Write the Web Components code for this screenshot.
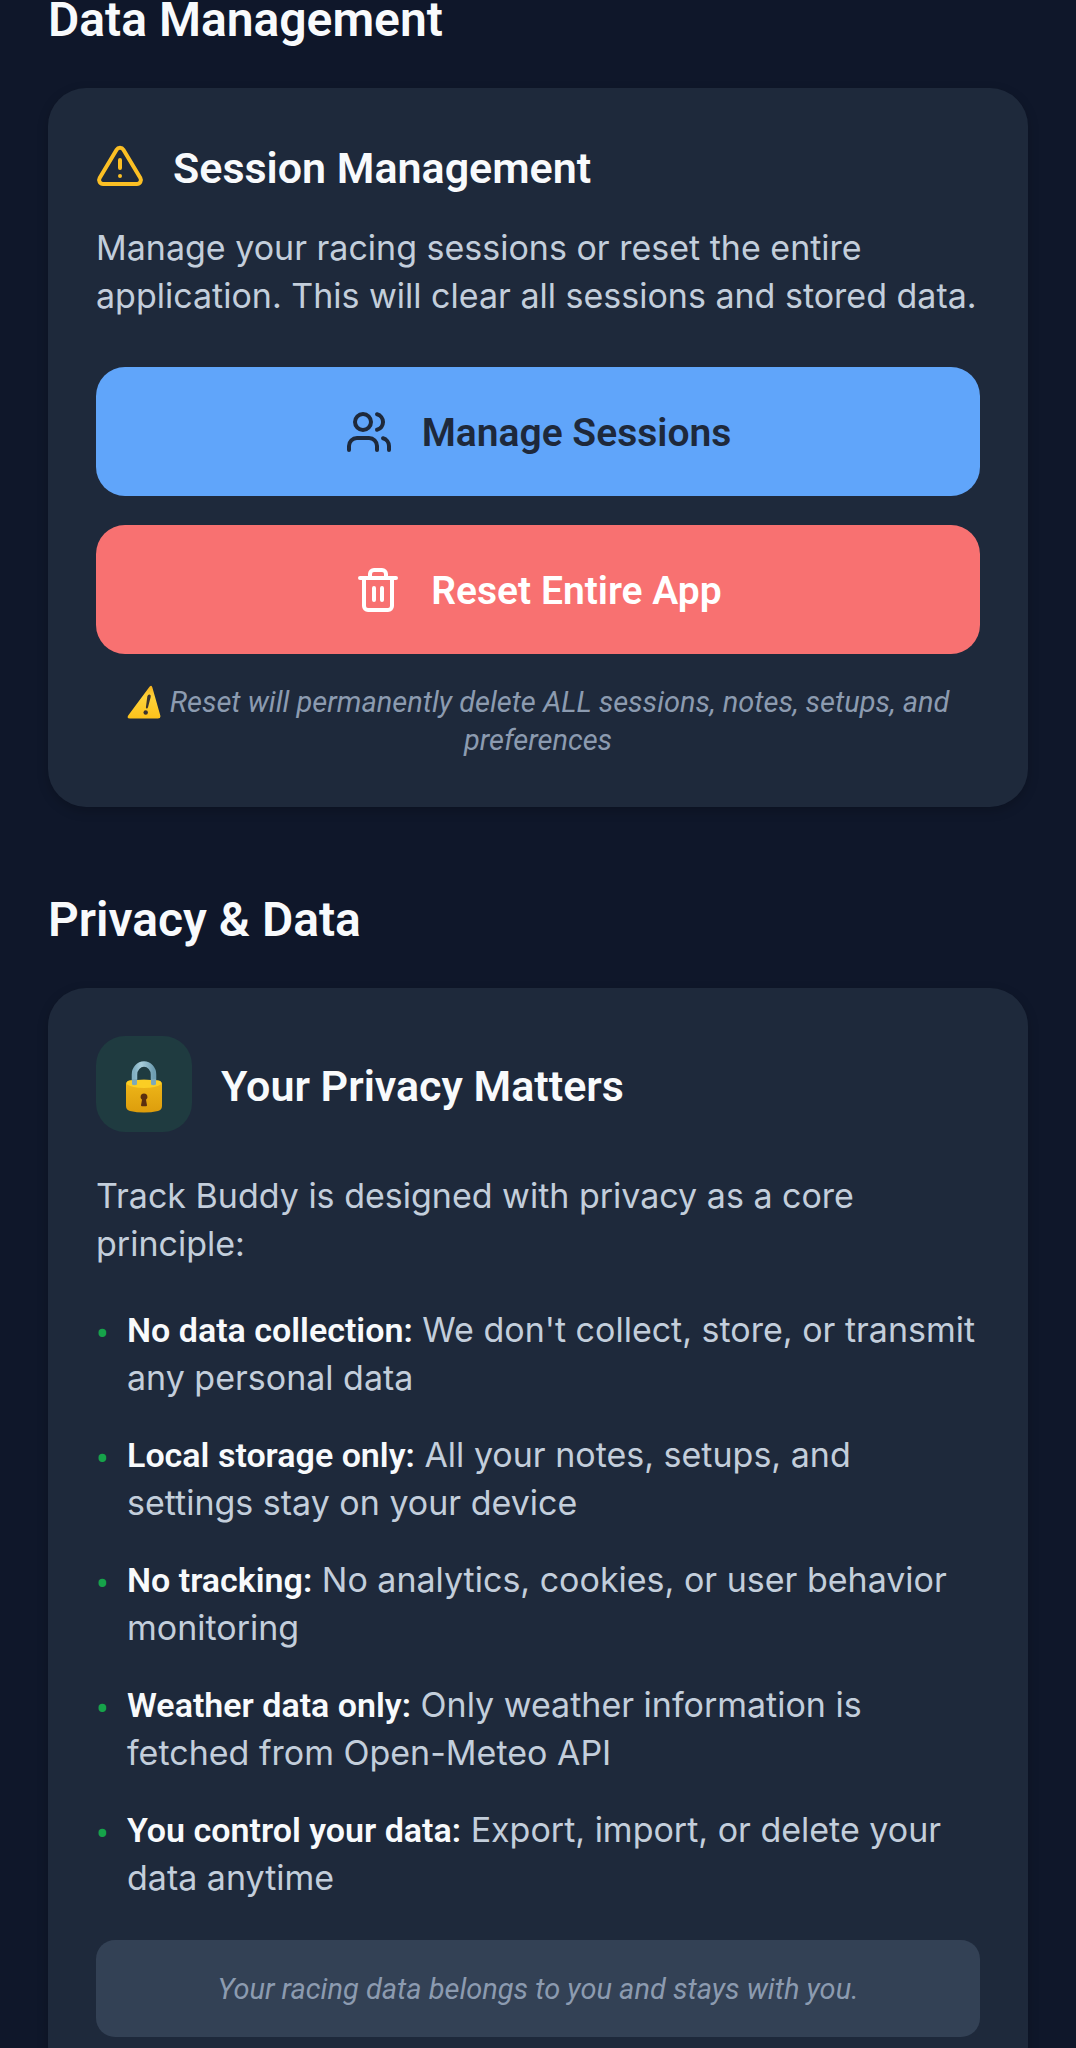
<!DOCTYPE html>
<html lang="en">
<head>
<meta charset="utf-8">
<meta name="viewport" content="width=device-width, initial-scale=1">
<title>Track Buddy – Settings</title>
<style>
  html { background: #0f172a; }
  body { margin: 0; font-family: Roboto, "Liberation Sans", sans-serif; color: #f8fafc; }
</style>
</head>
<body>
<settings-page>
  <settings-section heading="Data Management">
    <settings-card heading="Session Management">
      <app-icon slot="icon" name="alert"></app-icon>
      <body-text>Manage your racing sessions or reset the entire application. This will clear all sessions and stored data.</body-text>
      <button-stack>
        <action-button icon="users">Manage Sessions</action-button>
        <action-button icon="trash" variant="danger">Reset Entire App</action-button>
        <fine-print><app-icon name="warning"></app-icon> Reset will permanently delete ALL sessions, notes, setups, and preferences</fine-print>
      </button-stack>
    </settings-card>
  </settings-section>
  <settings-section heading="Privacy &amp; Data">
    <settings-card heading="Your Privacy Matters" roomy>
      <icon-badge slot="icon"><app-icon name="lock"></app-icon></icon-badge>
      <body-text>Track Buddy is designed with privacy as a core principle:</body-text>
      <promise-list></promise-list>
      <note-box><fine-print>Your racing data belongs to you and stays with you.</fine-print></note-box>
    </settings-card>
  </settings-section>
</settings-page>

<script>
class BaseElement extends HTMLElement {
  connectedCallback() {
    if (this.shadowRoot) return;
    this.attachShadow({ mode: "open" }).innerHTML = this.render();
  }
}

const define = (name, render) =>
  customElements.define(name, class extends BaseElement { render() { return render(this); } });

const ICONS = {
  alert: `<svg class="line" viewBox="0 0 24 24"><path d="M10.290 2.860 1.820 17a2 2 0 0 0 1.710 3h16.940a2 2 0 0 0 1.710-3L13.710 2.860a2 2 0 0 0-3.420 0z"/><path d="M12 8v4M12 16h.01"/></svg>`,
  users: `<svg class="line" viewBox="0 0 24 24"><path d="M16 21v-2a4 4 0 0 0-4-4H6a4 4 0 0 0-4 4v2"/><circle cx="9" cy="7" r="4"/><path d="M22 21v-2a4 4 0 0 0-3-3.87M16 3.13a4 4 0 0 1 0 7.75"/></svg>`,
  trash: `<svg class="line" viewBox="0 0 24 24"><path d="M3 6h18M19 6v14a2 2 0 0 1-2 2H7a2 2 0 0 1-2-2V6M8 6V4a2 2 0 0 1 2-2h4a2 2 0 0 1 2 2v2M10 11v6M14 11v6"/></svg>`,
  warning: `<svg viewBox="0 0 34 34" width="34" height="34"><defs><linearGradient id="w" x1="0" y1="0" x2="0" y2="1"><stop offset="0" stop-color="#f6b21c"/><stop offset=".35" stop-color="#ffd23a"/><stop offset="1" stop-color="#fcc21b"/></linearGradient></defs><path d="M22.500 1.800Q24.600-.6 25.300 2.300L33.300 30.500Q34 33.600 31 33.600H3Q-.6 33.600 1.200 30.500Z" fill="url(#w)"/><path d="M20.300 11.500Q20.900 9.300 22.500 9.500 24.200 9.700 23.700 12L21 22.300Q20.700 23.500 19.800 23.500 18.800 23.500 18.900 22.300Z" fill="#3a3330"/><circle cx="18.700" cy="27.500" r="2.200" fill="#3a3330"/></svg>`,
  lock: `<svg viewBox="0 0 36 52" width="36" height="52"><defs><linearGradient id="b" x1="0" y1="0" x2="0" y2="1"><stop offset="0" stop-color="#efb81a"/><stop offset="1" stop-color="#dd9d0c"/></linearGradient><linearGradient id="s" x1="0" y1="0" x2="1" y2="0"><stop offset="0" stop-color="#83b0c2"/><stop offset=".35" stop-color="#a9cedb"/><stop offset="1" stop-color="#6f9eb2"/></linearGradient></defs><path d="M8.500 25V13.500a9.500 10.500 0 0 1 19 0V25" fill="none" stroke="url(#s)" stroke-width="5.500"/><path d="M0 23.500Q0 20 4 19.600Q18 18 32 19.600Q36 20 36 23.500V45Q36 49 32 50Q18 53 4 50Q0 49 0 45Z" fill="url(#b)"/><path d="M.5 23Q.5 20 4 19.600Q18 18 32 19.600Q35.500 20 35.500 23Q30 27 18 27Q6 27 .5 23Z" fill="#fbce24"/><path d="M6 18h5v5.500q-2.500 1.500-5 0zM25 18h5v5.500q-2.500 1.500-5 0z" fill="#7fa9b8"/><path d="M18 32.500a3.400 3.400 0 0 1 2 6.200l1 5.600q0 1-1 1h-4q-1 0-1-1l1-5.600a3.400 3.400 0 0 1 2-6.200Z" fill="#5a2f10"/></svg>`
};

define("app-icon", el => `
  <style>
    :host { display: inline-block; flex: none; }
    :host([slot="icon"]) { color: #fbbf24; }
    :host([name="warning"]) { vertical-align: -7px; margin-right: 2px; }
    svg { display: block; }
    .line { width: 48px; height: 48px; fill: none; stroke: currentColor; stroke-width: 2; stroke-linecap: round; stroke-linejoin: round; }
  </style>${ICONS[el.getAttribute("name")].replace("<svg", '<svg aria-hidden="true"')}`);

define("settings-page", () => `
  <style>
    main { display: flex; flex-direction: column; gap: 93px; padding: 0 48px 48px; }
  </style><main><slot></slot></main>`);

define("settings-section", el => `
  <style>
    section { display: flex; flex-direction: column; gap: 48px; }
    h2 { margin: 0; font-size: 48px; line-height: 40px; font-weight: 600; }
  </style>
  <section><h2>${el.getAttribute("heading").replace("&", "&amp;")}</h2><slot></slot></section>`);

define("settings-card", el => `
  <style>
    :host { display: block; }
    article { display: flex; flex-direction: column; gap: 47px; padding: 48px; border-radius: 38px; background: #1e293b; box-shadow: 0 4px 12px rgb(0 0 0 / .2); }
    header { display: flex; align-items: center; gap: 29px; margin-bottom: -23px; }
    h3 { margin: 0; font-size: 43px; line-height: 64px; font-weight: 600; }
    :host([roomy]) article { gap: 38px; }
    :host([roomy]) header { margin-bottom: 2px; }
    :host([roomy]) h3 { padding-top: 4px; }
  </style>
  <article><header><slot name="icon"></slot><h3>${el.getAttribute("heading")}</h3></header><slot></slot></article>`);

define("icon-badge", () => `
  <style>
    :host { display: grid; place-items: center; box-sizing: border-box; width: 96px; height: 96px; padding-top: 6px; border-radius: 29px; background: #1f3b40; }
  </style><slot></slot>`);

define("body-text", () => `
  <style>
    :host { display: block; }
    p { margin: 0; font: 400 34px/48px Inter, "Liberation Sans", sans-serif; color: #c3cedb; }
  </style><p><slot></slot></p>`);

define("button-stack", () => `
  <style>:host { display: flex; flex-direction: column; gap: 29px; }</style><slot></slot>`);

define("action-button", el => `
  <style>
    :host { display: block; --fill: #60a5fa; --ink: #1e293b; }
    :host([variant="danger"]) { --fill: #f87171; --ink: #ffffff; }
    button { display: flex; align-items: center; justify-content: center; gap: 29px; width: 100%; padding: 40px; border: 0; border-radius: 29px; background: var(--fill); color: var(--ink); font: 600 39px/45px Roboto, "Liberation Sans", sans-serif; cursor: pointer; }
    span { padding-top: 4px; }
  </style>
  <button type="button"><app-icon name="${el.getAttribute("icon")}"></app-icon><span><slot></slot></span></button>`);

define("fine-print", () => `
  <style>
    :host { display: block; }
    p { margin: 0; font-size: 29px; line-height: 38px; font-style: italic; text-align: center; color: #8c9bb0; }
  </style><p><slot></slot></p>`);

define("promise-list", () => {
  const items = [
    ["No data collection:", "We don't collect, store, or transmit any personal data"],
    ["Local storage only:", "All your notes, setups, and settings stay on your device"],
    ["No tracking:", "No analytics, cookies, or user behavior monitoring"],
    ["Weather data only:", "Only weather information is fetched from Open-Meteo API"],
    ["You control your data:", "Export, import, or delete your data anytime"]
  ];
  return `
  <style>
    :host { display: block; }
    ul { display: flex; flex-direction: column; gap: 29px; margin: 0; padding: 0; list-style: none; font: 400 34px/48px Inter, "Liberation Sans", sans-serif; color: #c3cedb; }
    li { display: flex; gap: 19px; }
    .dot { flex: none; width: 12px; text-align: center; color: #16a34a; font: 400 38px/56px Roboto, sans-serif; }
    strong { font-family: Roboto, "Liberation Sans", sans-serif; font-weight: 600; color: #f8fafc; }
  </style>
  <ul>${items.map(([t, d]) => `<li><span class="dot">•</span><span><strong>${t}</strong> ${d}</span></li>`).join("")}</ul>`;
});

define("note-box", () => `
  <style>
    :host { display: block; padding: 30px 29px 29px; border-radius: 19px; background: #334155; }
  </style><slot></slot>`);
</script>
</body>
</html>
